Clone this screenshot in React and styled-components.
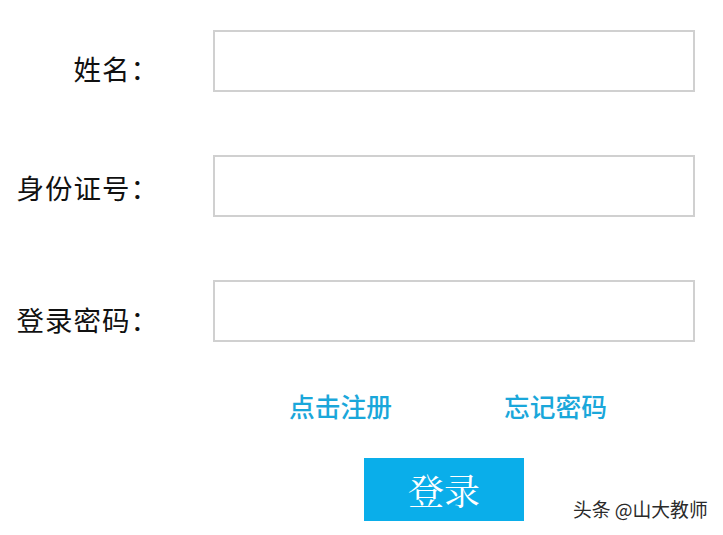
import styled, { createGlobalStyle } from 'styled-components'

const GlobalStyle = createGlobalStyle`
  html, body {
    margin: 0;
    padding: 0;
    background: #fff;
  }
  body {
    font-family: "Noto Sans CJK SC", "Noto Sans", sans-serif;
  }
`

const fields = [
  { label: '姓名：', shift: 7 },
  { label: '身份证号：', shift: 1 },
  { label: '登录密码：', shift: 8 },
]

export default function App() {
  return (
    <Page>
      <GlobalStyle />
      <Form>
        {fields.map((f) => (
          <Row key={f.label}>
            <Label $shift={f.shift}>{f.label}</Label>
            <Input type="text" />
          </Row>
        ))}
        <Links>
          <LinkText>点击注册</LinkText>
          <LinkText>忘记密码</LinkText>
        </Links>
        <ButtonRow>
          <LoginButton>登录</LoginButton>
        </ButtonRow>
      </Form>
      <Watermark>头条 @山大教师</Watermark>
    </Page>
  )
}

const Page = styled.div`
  position: relative;
  width: 723px;
  height: 535px;
  overflow: hidden;
`

const Form = styled.div`
  display: flex;
  flex-direction: column;
  padding-top: 30px;
  gap: 63px;
`

const Row = styled.div`
  display: grid;
  grid-template-columns: 213px 482px;
  align-items: center;
  height: 62px;
`

const Label = styled.div`
  justify-self: end;
  padding-right: 54px;
  font-size: 27.5px;
  letter-spacing: 1px;
  color: #111;
  white-space: nowrap;
  transform: translateY(${(p) => p.$shift}px);
`

const Input = styled.input`
  box-sizing: border-box;
  width: 482px;
  height: 62px;
  border: 2px solid #d0d0d0;
  background: #fff;
  outline: none;
`

const Links = styled.div`
  display: flex;
  gap: 112px;
  padding-left: 289px;
  margin-top: -14px;
  height: 30px;
`

const LinkText = styled.span`
  font-size: 25.75px;
  font-weight: 500;
  line-height: 30px;
  color: #1aa7da;
`

const ButtonRow = styled.div`
  display: flex;
  padding-left: 364px;
  margin-top: -26px;
`

const LoginButton = styled.button`
  width: 160px;
  height: 63px;
  border: none;
  background: #0aaeea;
  color: #fff;
  font-family: "Noto Serif CJK SC", "Noto Sans CJK SC", serif;
  font-size: 36px;
  padding: 0;
  cursor: pointer;
`

const Watermark = styled.div`
  position: absolute;
  left: 573px;
  top: 495px;
  font-size: 18.8px;
  color: #2a2a2a;
  text-shadow: 1px 1px 0 #fff, -1px -1px 0 #fff;
  white-space: nowrap;
`
